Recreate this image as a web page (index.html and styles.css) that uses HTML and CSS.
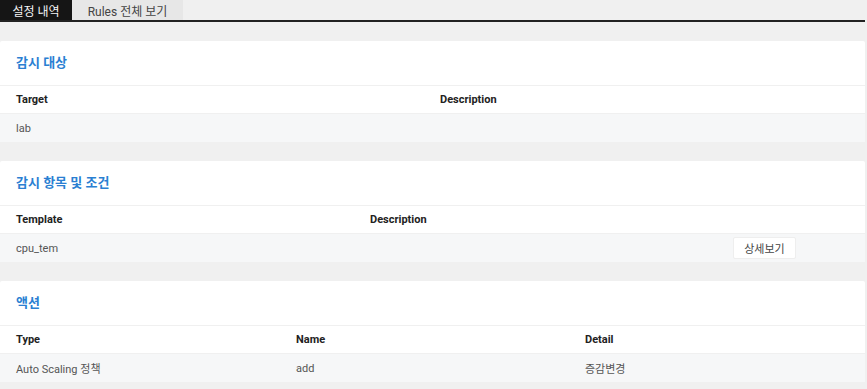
FILE: index.html
```html
<!DOCTYPE html>
<html lang="ko">
<head>
  <meta charset="UTF-8" />
  <meta name="viewport" content="width=device-width, initial-scale=1.0"/>
  <title>설정 내역</title>
  <link rel="stylesheet" href="styles.css">
</head>
<body>
  <nav class="tabs">
    <a class="tab active" href="#">설정 내역</a>
    <a class="tab" href="#">Rules 전체 보기</a>
  </nav>

  <main class="content">
    <section class="card">
      <h2 class="card-title">감시 대상</h2>
      <div class="grid cols-target">
        <div class="row head">
          <span>Target</span>
          <span>Description</span>
        </div>
        <div class="row data">
          <span>lab</span>
          <span></span>
        </div>
      </div>
    </section>

    <section class="card">
      <h2 class="card-title">감시 항목 및 조건</h2>
      <div class="grid cols-template">
        <div class="row head">
          <span>Template</span>
          <span>Description</span>
          <span></span>
        </div>
        <div class="row data">
          <span>cpu_tem</span>
          <span></span>
          <span><button class="btn">상세보기</button></span>
        </div>
      </div>
    </section>

    <section class="card">
      <h2 class="card-title">액션</h2>
      <div class="grid cols-action">
        <div class="row head">
          <span>Type</span>
          <span>Name</span>
          <span>Detail</span>
        </div>
        <div class="row data">
          <span>Auto Scaling 정책</span>
          <span>add</span>
          <span>증감변경</span>
        </div>
      </div>
    </section>
  </main>
</body>
</html>
```

FILE: styles.css
```css
body {
  margin: 0;
  font-family: Roboto, "Noto Sans CJK KR", sans-serif;
  background: #f0f0f0;
  color: #333;
}

.tabs {
  display: flex;
  height: 20px;
  margin-right: 2px;
  border-bottom: 2px solid #222;
}

.tab {
  display: flex;
  align-items: center;
  justify-content: center;
  box-sizing: border-box;
  font-size: 12px;
  white-space: nowrap;
  color: #444;
  background: #e7e7e7;
  text-decoration: none;
}

.tab.active {
  width: 72px;
  background: #151515;
  color: #f4f4f4;
}

.tab:not(.active) {
  width: 111px;
}

.content {
  padding-top: 19px;
  margin-right: 2px;
}

.card {
  background: #fff;
  margin-bottom: 19px;
  border-radius: 2px;
}

.card-title {
  margin: 0;
  height: 45px;
  display: flex;
  align-items: center;
  padding: 0 0 3px 16px;
  font-size: 13px;
  font-weight: 700;
  color: #2a7fd2;
  border-bottom: 1px solid #f0f0f0;
  box-sizing: border-box;
}

.row {
  display: grid;
  align-items: center;
  font-size: 11px;
}

.row span {
  padding-left: 16px;
}

.row.head {
  height: 27px;
  font-weight: 700;
  color: #222;
  border-bottom: 1px solid #f0f0f0;
}

.row.data {
  height: 28px;
  background: #f6f7f8;
  color: #555;
}

.cols-target .row {
  grid-template-columns: 424px 1fr;
}

.cols-template .row {
  grid-template-columns: 354px 363px 1fr;
}

.cols-action .row {
  grid-template-columns: 280px 289px 1fr;
}

.btn {
  font-family: inherit;
  font-size: 11px;
  color: #444;
  background: #fff;
  border: 1px solid #eee;
  border-radius: 2px;
  width: 63px;
  height: 22px;
  cursor: pointer;
}
```
